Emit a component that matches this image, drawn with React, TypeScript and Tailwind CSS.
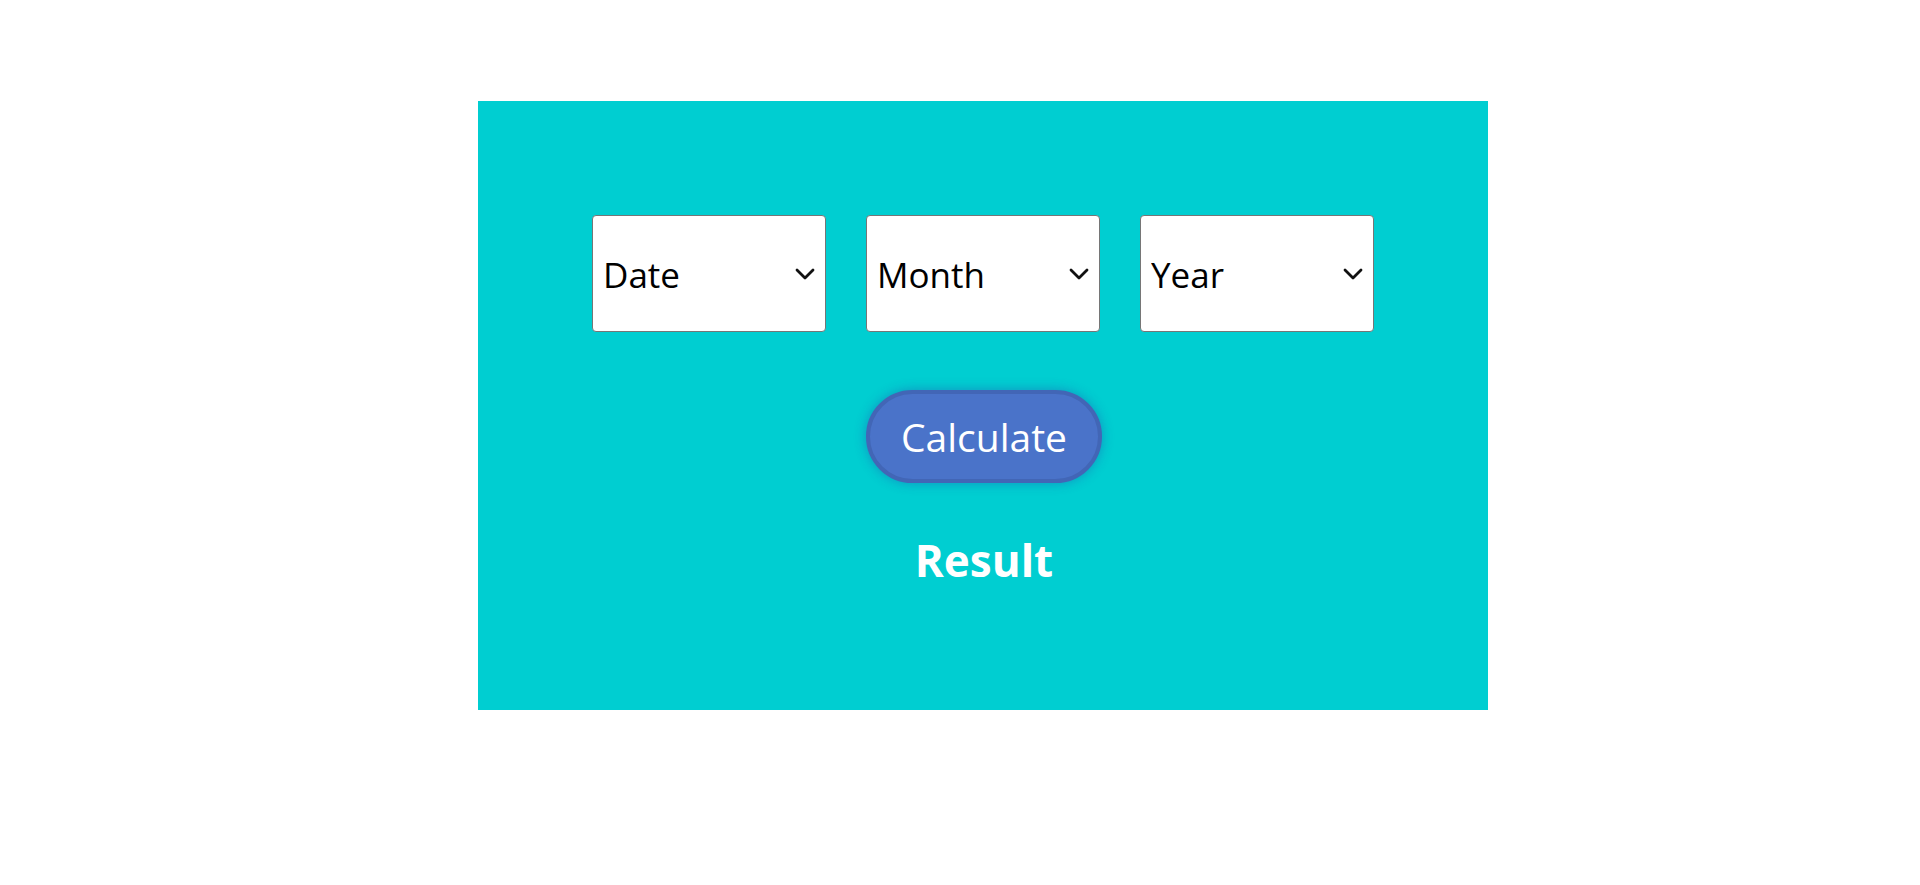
import React, { useState } from 'react'

const Chevron = () => (
  <svg
    className="pointer-events-none absolute right-[11px] top-1/2 -translate-y-1/2"
    width="20"
    height="12"
    viewBox="0 0 20 12"
    fill="none"
  >
    <path d="M2 2 L10 10 L18 2" stroke="#111" strokeWidth="2.8" strokeLinecap="round" strokeLinejoin="round" />
  </svg>
)

interface PickerProps {
  label: string
  options: string[]
}

const Picker: React.FC<PickerProps> = ({ label, options }) => {
  const [value, setValue] = useState('')
  return (
    <div className="relative w-[234px] h-[117px]">
      <select
        value={value}
        onChange={(e) => setValue(e.target.value)}
        className="appearance-none w-full h-full bg-white border border-[#767676] rounded-[4px] pl-[10px] pr-[40px] pt-[4px] text-[35px] text-black outline-none"
        style={{ fontFamily: '"Open Sans", "Noto Sans", sans-serif' }}
      >
        <option value="">{label}</option>
        {options.map((o) => (
          <option key={o} value={o}>
            {o}
          </option>
        ))}
      </select>
      <Chevron />
    </div>
  )
}

const days = Array.from({ length: 31 }, (_, i) => String(i + 1))
const months = ['January', 'February', 'March', 'April', 'May', 'June', 'July', 'August', 'September', 'October', 'November', 'December']
const years = Array.from({ length: 100 }, (_, i) => String(2024 - i))

export default function App() {
  return (
    <div className="min-h-screen bg-white" style={{ fontFamily: '"Open Sans", "Noto Sans", sans-serif' }}>
      <div className="pt-[101px] pl-[478px]">
        <div className="w-[1010px] h-[609px] bg-[#00ced1] flex flex-col items-center pt-[114px]">
          {/* selects */}
          <div className="flex gap-[40px]">
            <Picker label="Date" options={days} />
            <Picker label="Month" options={months} />
            <Picker label="Year" options={years} />
          </div>

          {/* button */}
          <button className="mt-[58px] w-[236px] h-[93px] rounded-full bg-[#4a73c9] border-[4px] border-[#4266b6] text-white text-[39px] leading-none shadow-[0_0_12px_rgba(40,70,170,0.45)] ml-[2px]">
            Calculate
          </button>

          <h2 className="mt-[47px] text-white font-bold text-[44px] leading-[60px] ml-[2px]">Result</h2>
        </div>
      </div>
    </div>
  )
}
